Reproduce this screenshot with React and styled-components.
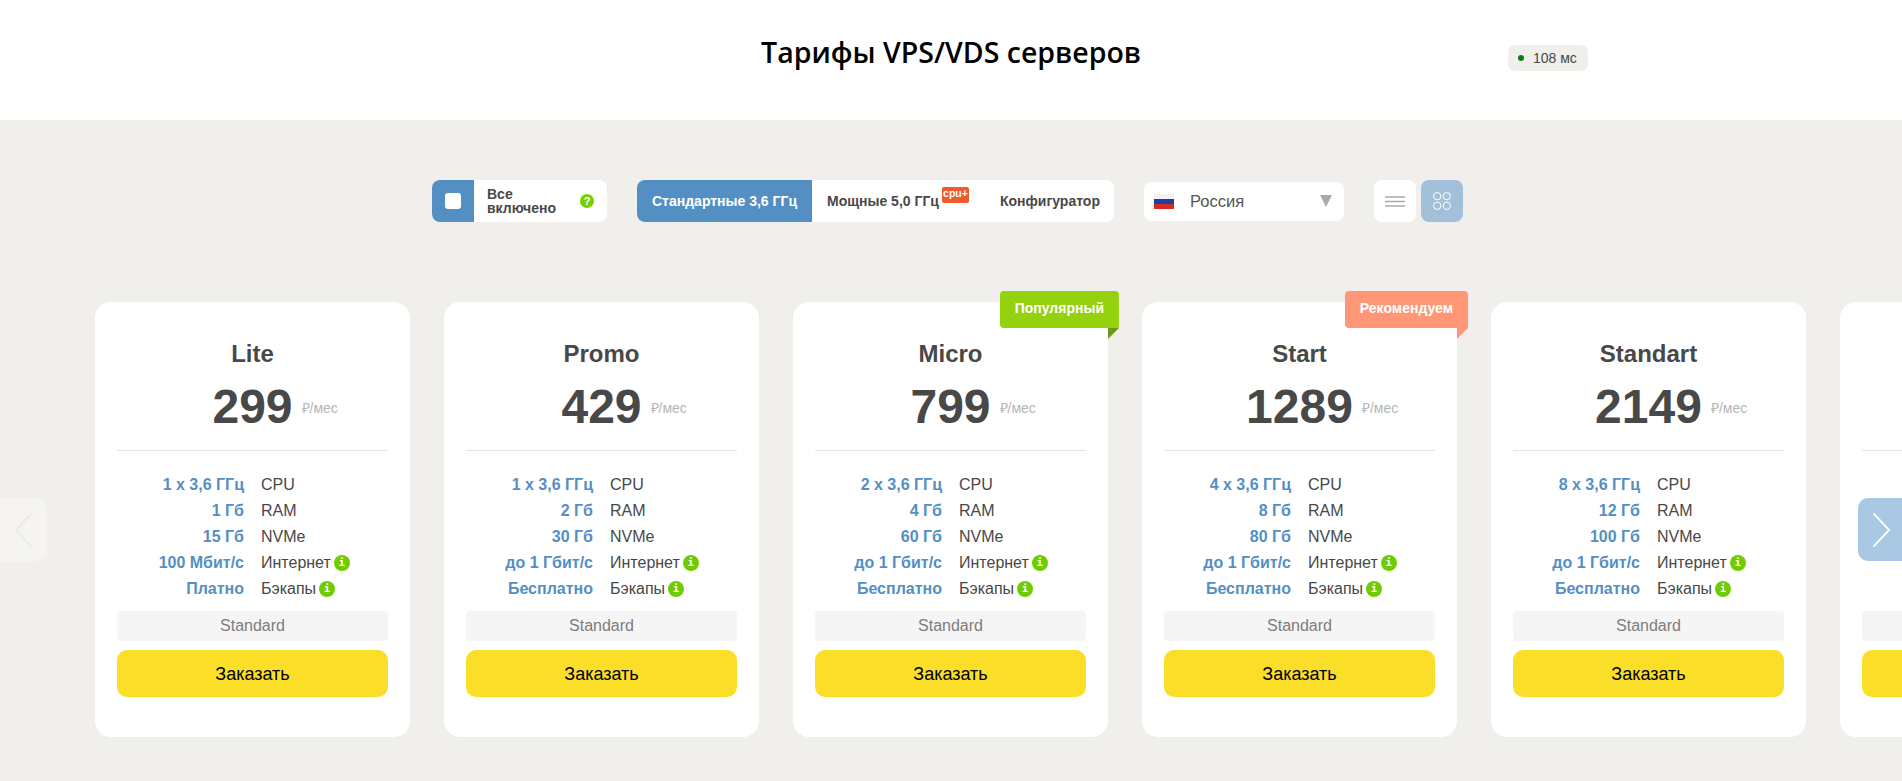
import React from 'react';
import styled, { createGlobalStyle } from 'styled-components';

const GlobalStyle = createGlobalStyle`
  html, body {
    margin: 0;
    padding: 0;
    height: 100%;
    overflow: hidden;
    background: #f0efeb;
    font-family: "Liberation Sans", Arial, sans-serif;
    color: #484848;
  }
`;

const Header = styled.header`
  display: grid;
  grid-template-columns: 1fr auto 1fr;
  height: 120px;
  box-sizing: border-box;
  background: #fff;
`;

const Title = styled.h1`
  grid-column: 2;
  margin: 32px 0 0;
  font-family: "Open Sans", "Noto Sans", sans-serif;
  font-size: 28.500px;
  line-height: 40px;
  font-weight: 600;
  color: #000;
`;

const Ping = styled.div`
  justify-self: start;
  display: flex;
  align-items: center;
  gap: 9px;
  height: 26px;
  margin: 45px 0 0 367px;
  padding: 0 11px 0 10px;
  border-radius: 7px;
  background: #f0efeb;
  font-size: 14px;
  color: #484848;
`;

const PingDot = styled.span`
  width: 6px;
  height: 6px;
  border-radius: 50%;
  background: #0a7d12;
`;

const Filters = styled.div`
  display: flex;
  align-items: center;
  height: 42px;
  margin-top: 60px;
  padding-left: 432px;
`;

const Toggle = styled.div`
  display: flex;
  align-items: stretch;
  width: 175px;
  height: 42px;
  border-radius: 8px;
  overflow: hidden;
  background: #fff;
`;

const ToggleBox = styled.div`
  display: flex;
  align-items: center;
  justify-content: center;
  width: 42px;
  background: #548fc4;

  &::after {
    content: '';
    width: 16px;
    height: 16px;
    border-radius: 3px;
    background: #fff;
  }
`;

const ToggleText = styled.div`
  width: 76px;
  margin-left: 13px;
  align-self: center;
  font-size: 14px;
  font-weight: 700;
  line-height: 14px;
  color: #484848;
`;

const HelpDot = styled.span`
  align-self: center;
  display: flex;
  align-items: center;
  justify-content: center;
  width: 14px;
  height: 14px;
  margin-left: 17px;
  border-radius: 50%;
  background: #77d000;
  font-size: 11px;
  font-weight: 700;
  color: #fff;
`;

const Tabs = styled.div`
  display: flex;
  height: 42px;
  margin-left: 30px;
  border-radius: 8px;
  overflow: hidden;
  background: #fff;
`;

const Tab = styled.div`
  display: flex;
  align-items: center;
  position: relative;
  width: ${p => p.$width}px;
  padding-left: 15px;
  box-sizing: border-box;
  font-size: 14px;
  font-weight: 700;
  white-space: nowrap;
  color: ${p => (p.$active ? '#fff' : '#484848')};
  background: ${p => (p.$active ? '#548fc4' : 'transparent')};
`;

const CpuTag = styled.span`
  position: absolute;
  top: 7px;
  left: 130px;
  width: 27px;
  height: 16px;
  border-radius: 2px;
  background: #f15a2b;
  font-size: 10.500px;
  line-height: 13px;
  text-align: center;
  color: #fff;
`;

const Select = styled.div`
  display: flex;
  align-items: center;
  width: 200px;
  height: 39px;
  margin-left: 30px;
  padding: 0 12px 0 10px;
  box-sizing: border-box;
  border-radius: 8px;
  background: #fff;
  font-size: 16.500px;
  color: #555;
`;

const Flag = styled.svg`
  width: 20px;
  height: 15px;
  margin-right: 16px;
`;

const Caret = styled.span`
  margin-left: auto;
  border-left: 6px solid transparent;
  border-right: 6px solid transparent;
  border-top: 12px solid #aaa;
`;

const ViewButton = styled.div`
  display: flex;
  align-items: center;
  justify-content: center;
  width: 42px;
  height: 42px;
  margin-left: ${p => p.$gap}px;
  border-radius: 8px;
  background: ${p => (p.$active ? '#a3c0da' : '#fff')};
`;

const Viewport = styled.div`
  position: relative;
  margin-top: 69px;
`;

const Slider = styled.main`
  display: flex;
  gap: 34px;
  padding: 11px 0 0 95px;
  overflow: hidden;
`;

const Card = styled.article`
  position: relative;
  flex: 0 0 315px;
  height: 435px;
  box-sizing: border-box;
  padding: 33px 22px 0;
  border-radius: 16px;
  background: #fff;
`;

const Name = styled.h2`
  height: 37px;
  margin: 0;
  font-size: 24px;
  line-height: 37px;
  font-weight: 700;
  text-align: center;
  color: #484848;
`;

const PriceRow = styled.div`
  display: grid;
  grid-template-columns: 1fr auto 1fr;
  align-items: center;
  height: 79px;
  padding-bottom: 8px;
  box-sizing: border-box;
  border-bottom: 1px solid #e3e3e3;
`;

const Price = styled.span`
  grid-column: 2;
  font-size: 48px;
  font-weight: 700;
  line-height: 60px;
`;

const Unit = styled.span`
  margin-left: 9px;
  font-size: 14px;
  color: #b5b5b5;
`;

const Specs = styled.div`
  display: grid;
  grid-template-columns: 127px 1fr;
  column-gap: 17px;
  grid-auto-rows: 26px;
  height: 130px;
  margin-top: 21px;
  line-height: 26px;
`;

const SpecValue = styled.div`
  font-size: 16px;
  font-weight: 700;
  text-align: right;
  white-space: nowrap;
  color: #548fc4;
`;

const SpecLabel = styled.div`
  display: flex;
  align-items: center;
  gap: 3px;
  font-size: 16px;
  white-space: nowrap;
`;

const InfoDot = styled.span`
  display: flex;
  align-items: center;
  justify-content: center;
  width: 16px;
  height: 16px;
  border-radius: 50%;
  background: #6fcc00;
  font-family: "DejaVu Sans Mono", monospace;
  font-size: 10px;
  font-weight: 700;
  color: #fff;
`;

const Plan = styled.div`
  height: 30px;
  margin-top: 9px;
  border-radius: 4px;
  background: #f5f5f5;
  font-size: 16px;
  line-height: 30px;
  text-align: center;
  color: #7d7d7d;
`;

const OrderButton = styled.button`
  display: block;
  width: 100%;
  height: 47px;
  margin-top: 9px;
  padding: 1px 0 0;
  border: 0;
  border-radius: 10px;
  background: #fbde28;
  font-family: inherit;
  font-size: 18px;
  color: #000;
`;

const Ribbon = styled.div`
  position: absolute;
  top: -11px;
  right: -11px;
  height: 37px;
  padding: 0 15px;
  border-radius: 4px 4px 0 4px;
  background: ${p => p.$color};
  font-size: 14px;
  font-weight: 700;
  line-height: 35px;
  color: #fff;

  &::after {
    content: '';
    position: absolute;
    top: 37px;
    right: 0;
    border-top: 11px solid ${p => p.$fold};
    border-right: 11px solid transparent;
  }
`;

const Arrow = styled.div`
  position: absolute;
  top: 207px;
  ${p => (p.$side === 'left' ? 'left: 0;' : 'right: -3px;')}
  display: flex;
  align-items: center;
  justify-content: ${p => (p.$side === 'left' ? 'flex-end' : 'flex-start')};
  width: 47px;
  height: 63px;
  padding: 0 14px;
  box-sizing: border-box;
  border-radius: ${p => (p.$side === 'left' ? '0 10px 10px 0' : '10px 0 0 10px')};
  background: ${p => (p.$side === 'left' ? '#f5f4f1' : '#a9c8e3')};
`;

const plans = [
  { name: 'Lite', price: 299, cpu: '1 x 3,6 ГГц', ram: '1 Гб', disk: '15 Гб', net: '100 Мбит/с', backup: 'Платно' },
  { name: 'Promo', price: 429, cpu: '1 x 3,6 ГГц', ram: '2 Гб', disk: '30 Гб', net: 'до 1 Гбит/с', backup: 'Бесплатно' },
  { name: 'Micro', price: 799, cpu: '2 x 3,6 ГГц', ram: '4 Гб', disk: '60 Гб', net: 'до 1 Гбит/с', backup: 'Бесплатно', ribbon: 'Популярный', color: '#94d10f', fold: '#6f9a12' },
  { name: 'Start', price: 1289, cpu: '4 x 3,6 ГГц', ram: '8 Гб', disk: '80 Гб', net: 'до 1 Гбит/с', backup: 'Бесплатно', ribbon: 'Рекомендуем', color: '#ff9777', fold: '#ff9777' },
  { name: 'Standart', price: 2149, cpu: '8 x 3,6 ГГц', ram: '12 Гб', disk: '100 Гб', net: 'до 1 Гбит/с', backup: 'Бесплатно' },
];

const PlanCard = ({ plan }) => (
  <Card>
    {plan.ribbon && <Ribbon $color={plan.color} $fold={plan.fold}>{plan.ribbon}</Ribbon>}
    <Name>{plan.name}</Name>
    <PriceRow>
      <Price>{plan.price}</Price>
      <Unit>₽/мес</Unit>
    </PriceRow>
    <Specs>
      <SpecValue>{plan.cpu}</SpecValue>
      <SpecLabel>CPU</SpecLabel>
      <SpecValue>{plan.ram}</SpecValue>
      <SpecLabel>RAM</SpecLabel>
      <SpecValue>{plan.disk}</SpecValue>
      <SpecLabel>NVMe</SpecLabel>
      <SpecValue>{plan.net}</SpecValue>
      <SpecLabel>Интернет<InfoDot>i</InfoDot></SpecLabel>
      <SpecValue>{plan.backup}</SpecValue>
      <SpecLabel>Бэкапы<InfoDot>i</InfoDot></SpecLabel>
    </Specs>
    <Plan>Standard</Plan>
    <OrderButton>Заказать</OrderButton>
  </Card>
);

// the next card only peeks in at the right edge, none of its text is visible
const PeekCard = () => (
  <Card>
    <Name />
    <PriceRow />
    <Specs />
    <Plan />
    <OrderButton aria-label="Заказать" />
  </Card>
);

export default function App() {
  return (
    <>
      <GlobalStyle />
      <Header>
        <Title>Тарифы VPS/VDS серверов</Title>
        <Ping><PingDot />108 мс</Ping>
      </Header>
      <Filters>
        <Toggle>
          <ToggleBox />
          <ToggleText>Все<br />включено</ToggleText>
          <HelpDot>?</HelpDot>
        </Toggle>
        <Tabs>
          <Tab $active $width={175}>Стандартные 3,6 ГГц</Tab>
          <Tab $width={173}>Мощные 5,0 ГГц<CpuTag>cpu+</CpuTag></Tab>
          <Tab $width={129}>Конфигуратор</Tab>
        </Tabs>
        <Select>
          <Flag viewBox="0 0 20 15">
            <rect width="20" height="5" fill="#f4f4f4" />
            <rect y="5" width="20" height="5" fill="#1f3fa8" />
            <rect y="10" width="20" height="5" fill="#d52b1e" />
          </Flag>
          Россия
          <Caret />
        </Select>
        <ViewButton $gap={30}>
          <svg width="20" height="11" viewBox="0 0 20 11">
            <path d="M0 1h20M0 5.500h20M0 10h20" stroke="#aaa" strokeWidth="1.400" />
          </svg>
        </ViewButton>
        <ViewButton $active $gap={5}>
          <svg width="18" height="18" viewBox="0 0 18 18" fill="none" stroke="#fff" strokeWidth="1">
            <circle cx="4.200" cy="4.200" r="3.700" />
            <circle cx="13.800" cy="4.200" r="3.700" />
            <circle cx="4.200" cy="13.800" r="3.700" />
            <circle cx="13.800" cy="13.800" r="3.700" />
          </svg>
        </ViewButton>
      </Filters>
      <Viewport>
        <Slider>
          {plans.map(plan => <PlanCard key={plan.name} plan={plan} />)}
          <PeekCard />
        </Slider>
        <Arrow $side="left">
          <svg width="20" height="36" viewBox="0 0 20 36" fill="none" stroke="#ebeae6" strokeWidth="2" strokeLinecap="round">
            <path d="M18 1L2 18l16 17" />
          </svg>
        </Arrow>
        <Arrow $side="right">
          <svg width="20" height="36" viewBox="0 0 20 36" fill="none" stroke="#fff" strokeWidth="2" strokeLinecap="round">
            <path d="M2 1l16 17L2 35" />
          </svg>
        </Arrow>
      </Viewport>
    </>
  );
}
